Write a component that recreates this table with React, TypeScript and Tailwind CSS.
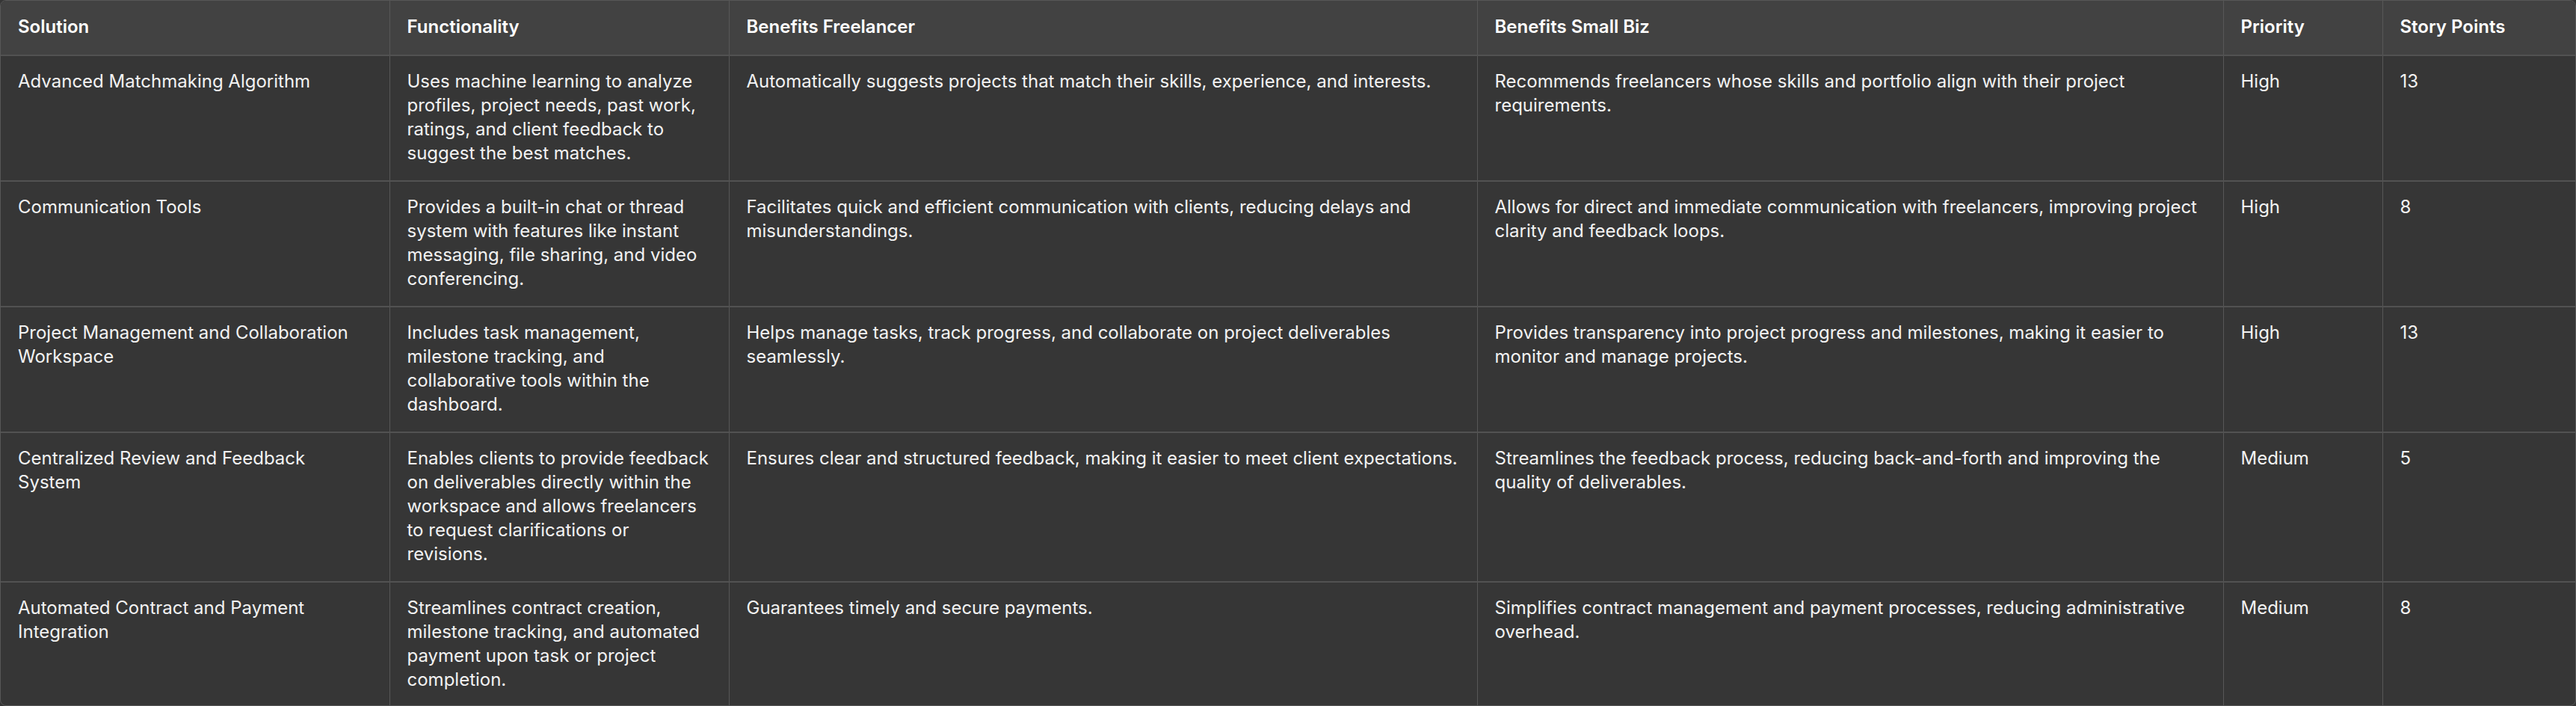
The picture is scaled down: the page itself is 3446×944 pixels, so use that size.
import React from "react";

const headers = ["Solution", "Functionality", "Benefits Freelancer", "Benefits Small Biz", "Priority", "Story Points"];

const rows: string[][] = [
  [
    "Advanced Matchmaking Algorithm",
    "Uses machine learning to analyze profiles, project needs, past work, ratings, and client feedback to suggest the best matches.",
    "Automatically suggests projects that match their skills, experience, and interests.",
    "Recommends freelancers whose skills and portfolio align with their project requirements.",
    "High",
    "13",
  ],
  [
    "Communication Tools",
    "Provides a built-in chat or thread system with features like instant messaging, file sharing, and video conferencing.",
    "Facilitates quick and efficient communication with clients, reducing delays and misunderstandings.",
    "Allows for direct and immediate communication with freelancers, improving project clarity and feedback loops.",
    "High",
    "8",
  ],
  [
    "Project Management and Collaboration Workspace",
    "Includes task management, milestone tracking, and collaborative tools within the dashboard.",
    "Helps manage tasks, track progress, and collaborate on project deliverables seamlessly.",
    "Provides transparency into project progress and milestones, making it easier to monitor and manage projects.",
    "High",
    "13",
  ],
  [
    "Centralized Review and Feedback System",
    "Enables clients to provide feedback on deliverables directly within the workspace and allows freelancers to request clarifications or revisions.",
    "Ensures clear and structured feedback, making it easier to meet client expectations.",
    "Streamlines the feedback process, reducing back-and-forth and improving the quality of deliverables.",
    "Medium",
    "5",
  ],
  [
    "Automated Contract and Payment Integration",
    "Streamlines contract creation, milestone tracking, and automated payment upon task or project completion.",
    "Guarantees timely and secure payments.",
    "Simplifies contract management and payment processes, reducing administrative overhead.",
    "Medium",
    "8",
  ],
];

export default function App() {
  return (
    <div className="w-[3446px] h-[944px] bg-[#363636]">
      <div
        className="w-[3446px] h-[944px] overflow-hidden rounded-[8px] border border-[#575757] bg-[#363636] text-[#f2f2f2]"
        style={{ fontFamily: "Inter, 'Noto Sans', sans-serif" }}
      >
        <table className="w-full table-fixed border-collapse text-left text-[24px] leading-[32px]">
          <colgroup>
            <col className="w-[520px]" />
            <col className="w-[454px]" />
            <col className="w-[1001px]" />
            <col className="w-[998px]" />
            <col className="w-[213px]" />
            <col />
          </colgroup>
          <thead>
            <tr className="bg-[#424242]">
              {headers.map((h, i) => (
                <th
                  key={h}
                  className={`px-[23px] pt-[19px] pb-[21px] align-top font-semibold text-white ${i > 0 ? "border-l border-[#575757]" : ""}`}
                >
                  {h}
                </th>
              ))}
            </tr>
          </thead>
          <tbody>
            {rows.map((r, ri) => (
              <tr key={ri} className="border-t-2 border-[#525252]">
                {r.map((c, ci) => (
                  <td
                    key={ci}
                    className={`px-[23px] pt-[18px] pb-[20px] align-top font-normal ${ci > 0 ? "border-l border-[#575757]" : ""}`}
                  >
                    {c}
                  </td>
                ))}
              </tr>
            ))}
          </tbody>
        </table>
      </div>
    </div>
  );
}
